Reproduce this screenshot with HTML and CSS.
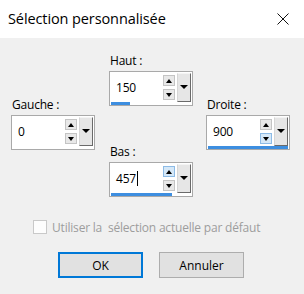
FILE: index.html
```html
<!DOCTYPE html>
<html lang="fr">
<head>
<meta charset="utf-8">
<title>Sélection personnalisée</title>
<link rel="stylesheet" href="styles.css">
</head>
<body>
<div class="dialog">
  <div class="titlebar">
    <span class="title">Sélection personnalisée</span>
    <svg class="close" width="12" height="12" viewBox="0 0 12 12"><path d="M0.5 0.5L11.5 11.5M11.5 0.5L0.5 11.5" stroke="#111" stroke-width="1"/></svg>
  </div>
  <div class="content">
    <div class="fields">
      <div class="col col-side">
        <div class="field">
          <div class="label">Gauche :</div>
          <div class="spin">
            <div class="spin-row">
              <span class="value">0</span>
              <div class="arrows">
                <span class="arr arr-up"></span>
                <span class="arr arr-down"></span>
              </div>
              <span class="drop"></span>
            </div>
            <div class="bar"><span class="fill" style="width:0px"></span></div>
          </div>
        </div>
      </div>
      <div class="col col-mid">
        <div class="field">
          <div class="label">Haut :</div>
          <div class="spin">
            <div class="spin-row">
              <span class="value">150</span>
              <div class="arrows">
                <span class="arr arr-up"></span>
                <span class="arr arr-down"></span>
              </div>
              <span class="drop"></span>
            </div>
            <div class="bar"><span class="fill" style="width:19px"></span></div>
          </div>
        </div>
        <div class="field field-bas">
          <div class="label">Bas :</div>
          <div class="spin">
            <div class="spin-row">
              <span class="value">457<span class="caret"></span></span>
              <div class="arrows">
                <span class="arr arr-up hot"></span>
                <span class="arr arr-down"></span>
              </div>
              <span class="drop"></span>
            </div>
            <div class="bar"><span class="fill" style="width:61px"></span></div>
          </div>
        </div>
      </div>
      <div class="col col-side">
        <div class="field">
          <div class="label">Droite :</div>
          <div class="spin">
            <div class="spin-row">
              <span class="value">900</span>
              <div class="arrows">
                <span class="arr arr-up"></span>
                <span class="arr arr-down hot"></span>
              </div>
              <span class="drop"></span>
            </div>
            <div class="bar"><span class="fill" style="width:80px"></span></div>
          </div>
        </div>
      </div>
    </div>
    <div class="check">
      <span class="box"></span>
      <span class="check-text">Utiliser la  sélection actuelle par défaut</span>
    </div>
    <div class="buttons">
      <button class="btn btn-default">OK</button>
      <button class="btn">Annuler</button>
    </div>
  </div>
</div>
</body>
</html>
```

FILE: styles.css
```css
* { box-sizing: border-box; }
html, body { margin: 0; padding: 0; }
body {
  width: 304px;
  height: 294px;
  background: #f0f0f0;
  font-family: "Open Sans", "Noto Sans", sans-serif;
  color: #000;
  overflow: hidden;
}
.dialog { width: 304px; height: 294px; display: flex; flex-direction: column; }
.titlebar {
  height: 38px;
  background: #fff;
  display: flex;
  align-items: center;
  justify-content: space-between;
  padding: 0 15px 0 8px;
}
.title { font-size: 14.5px; letter-spacing: -0.1px; padding-bottom: 1px; }
.close { display: block; }
.content { flex: 1; background: #f0f0f0; padding: 15px 0 0 11px; }
.fields { display: flex; gap: 0; }
.col { width: 84px; display: flex; flex-direction: column; }
.col-side { padding-top: 44px; }
.col-mid { margin: 0 13px 0 14px; }
.field-bas { margin-top: 38px; }
.label {
  font-size: 12px;
  line-height: 16px;
  height: 16px;
  margin: 0 0 2px 1px;
  letter-spacing: -0.2px;
}
.spin {
  width: 84px;
  height: 35px;
  background: #fff;
  border: 1px solid #a9a9a9;
  display: flex;
  flex-direction: column;
  padding: 1px 1px 0 1px;
}
.spin-row { flex: 1; display: flex; align-items: stretch; }
.value {
  flex: 1;
  font-size: 12px;
  letter-spacing: -0.2px;
  padding-left: 5px;
  display: flex;
  align-items: center;
  padding-bottom: 1px;
}
.caret { display: inline-block; width: 1px; height: 15px; background: #000; margin-left: 1px; }
.arrows {
  width: 12px;
  margin-right: 2px;
  padding-top: 2px;
  display: flex;
  flex-direction: column;
  gap: 3px;
}
.arr {
  width: 12px;
  height: 11px;
  background: #e8e8e8;
  border: 1px solid #c4c4c4;
  display: flex;
  align-items: center;
  justify-content: center;
}
.arr.hot { background: #d5e8f8; border-color: #8dbbe6; }
.arr::after { content: ""; width: 0; height: 0; border-left: 3.5px solid transparent; border-right: 3.5px solid transparent; }
.arr-up::after { border-bottom: 4px solid #000; }
.arr-down::after { border-top: 4px solid #000; }
.drop {
  width: 14px;
  background: #e6e6e6;
  border-left: 1px solid #d6d6d6;
  border-top: 1px solid #f4f4f4;
  border-right: 1px solid #6a6a6a;
  border-bottom: 1px solid #6a6a6a;
  display: flex;
  justify-content: center;
  padding-top: 11px;
}
.drop::after { content: ""; width: 0; height: 0; border-left: 4px solid transparent; border-right: 4px solid transparent; border-top: 4px solid #000; }
.bar { height: 3px; margin-top: 0; }
.fill { display: block; height: 3px; background: #3d8ee0; }
.check {
  display: flex;
  align-items: center;
  margin: 22px 0 0 22px;
  height: 16px;
}
.box { width: 14px; height: 14px; border: 1px solid #c9c9c9; background: #fdfdfd; margin-right: 5px; }
.check-text { font-size: 12px; color: #9d9d9d; white-space: pre; letter-spacing: -0.2px; }
.buttons { display: flex; gap: 16px; margin: 17px 0 0 47px; }
.btn {
  width: 85px;
  height: 26px;
  font-family: inherit;
  font-size: 12px;
  background: #e1e1e1;
  border: 1px solid #adadad;
  padding: 0;
  color: #000;
}
.btn-default { border: 2px solid #0078d7; }
```
